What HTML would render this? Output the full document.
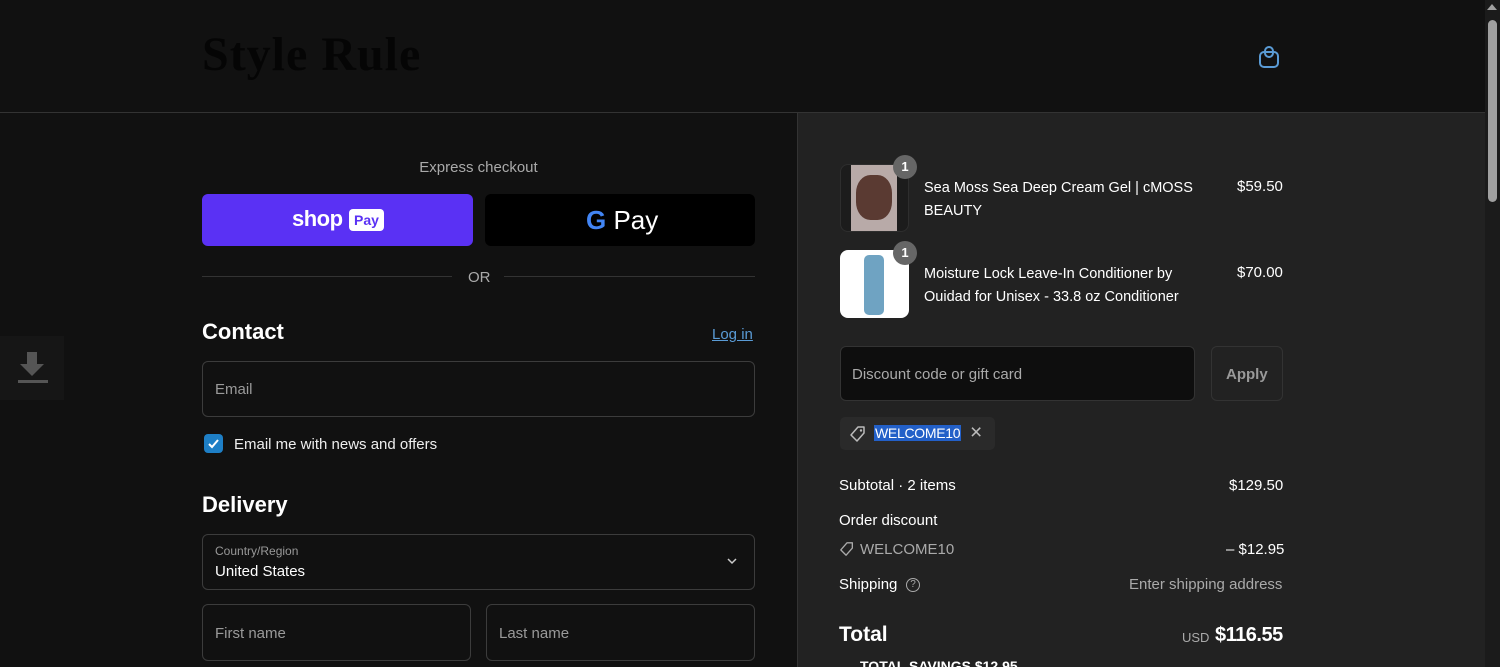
<!DOCTYPE html>
<html><head><meta charset="utf-8"><style>
*{box-sizing:border-box;margin:0;padding:0}
html,body{width:1500px;height:667px;overflow:hidden}
body{background:#111;font-family:"Liberation Sans",sans-serif;color:#eee;position:relative}
.abs{position:absolute}
.hdr{left:0;top:0;width:1485px;height:113px;border-bottom:1px solid #333;background:#111}
.logo{left:202px;top:27px;font-family:"Liberation Serif",serif;font-weight:bold;font-size:48px;color:#050505;letter-spacing:1px}
.right{left:797px;top:113px;width:688px;height:554px;background:#222;border-left:1px solid #333}
.sb{left:1485px;top:0;width:15px;height:667px;background:#1b1b1b}
.thumb{left:1488px;top:20px;width:9px;height:182px;background:#a0a0a0;border-radius:5px}
.field{border:1px solid #3c3c3c;border-radius:6px;background:#111}
.ph{font-size:15px;color:#9a9a9a}
.t15{font-size:15px}
</style></head><body>
<div class="abs hdr"></div>
<div class="abs logo">Style Rule</div>
<svg class="abs" style="left:1258px;top:44px" width="24" height="26" viewBox="0 0 24 26"><rect x="2" y="8" width="18" height="15" rx="4" fill="none" stroke="#5a9bd5" stroke-width="2"/><rect x="7" y="3" width="8" height="10" rx="4" fill="none" stroke="#5a9bd5" stroke-width="2"/></svg>
<div class="abs sb"></div><div class="abs thumb"></div>
<div class="abs" style="left:1487px;top:4px;width:0;height:0;border-left:5px solid transparent;border-right:5px solid transparent;border-bottom:6px solid #a0a0a0"></div>

<div class="abs" style="left:0;top:336px;width:64px;height:64px;background:#161616"></div>
<svg class="abs" style="left:16px;top:350px" width="34" height="36" viewBox="0 0 34 36"><path d="M11 2h10v12h7L16 26 4 14h7z" fill="#555"/><rect x="2" y="30" width="30" height="3" fill="#555"/></svg>

<div class="abs t15" style="left:202px;top:159px;width:553px;text-align:center;color:#aaa">Express checkout</div>
<div class="abs" style="left:202px;top:194px;width:271px;height:52px;background:#5a31f4;border-radius:6px"></div>
<div class="abs" style="left:292px;top:206px;font-size:22px;font-weight:bold;color:#fff;letter-spacing:-0.5px">shop</div>
<div class="abs" style="left:349px;top:209px;width:35px;height:22px;background:#fff;border-radius:4px;color:#5a31f4;font-size:14px;font-weight:bold;text-align:center;line-height:22px">Pay</div>
<div class="abs" style="left:485px;top:194px;width:270px;height:52px;background:#000;border-radius:6px"></div>
<div class="abs" style="left:586px;top:205px;font-size:26px;color:#fff"><span style="font-weight:bold;color:#4285f4">G</span> Pay</div>
<div class="abs" style="left:202px;top:276px;width:250px;height:1px;background:#333"></div>
<div class="abs" style="left:504px;top:276px;width:251px;height:1px;background:#333"></div>
<div class="abs t15" style="left:468px;top:269px;color:#aaa">OR</div>

<div class="abs" style="left:202px;top:319px;font-size:22px;font-weight:bold;color:#fff">Contact</div>
<div class="abs t15" style="left:712px;top:326px;color:#5a9bd5;text-decoration:underline">Log in</div>
<div class="abs field" style="left:202px;top:361px;width:553px;height:56px"></div>
<div class="abs ph" style="left:215px;top:381px">Email</div>
<div class="abs" style="left:204px;top:434px;width:19px;height:19px;background:#1e7fc6;border-radius:4px"></div>
<svg class="abs" style="left:206px;top:436px" width="15" height="15" viewBox="0 0 15 15"><path d="M3 8l3 3 6-7" fill="none" stroke="#fff" stroke-width="2"/></svg>
<div class="abs t15" style="left:234px;top:436px;color:#eee">Email me with news and offers</div>

<div class="abs" style="left:202px;top:492px;font-size:22px;font-weight:bold;color:#fff">Delivery</div>
<div class="abs field" style="left:202px;top:534px;width:553px;height:56px"></div>
<div class="abs" style="left:215px;top:544px;font-size:12px;color:#999">Country/Region</div>
<div class="abs t15" style="left:215px;top:563px;color:#fff">United States</div>
<svg class="abs" style="left:726px;top:557px" width="12" height="8" viewBox="0 0 12 8"><path d="M2 2l4 4 4-4" fill="none" stroke="#ccc" stroke-width="1.5"/></svg>
<div class="abs field" style="left:202px;top:604px;width:269px;height:57px"></div>
<div class="abs ph" style="left:215px;top:625px">First name</div>
<div class="abs field" style="left:486px;top:604px;width:269px;height:57px"></div>
<div class="abs ph" style="left:499px;top:625px">Last name</div>

<div class="abs right"></div>
<div class="abs" style="left:840px;top:164px;width:69px;height:68px;border-radius:8px;background:#1c1c1c;border:1px solid #2e2e2e"></div>
<div class="abs" style="left:851px;top:165px;width:46px;height:66px;background:#b8aaa8"></div>
<div class="abs" style="left:856px;top:175px;width:36px;height:45px;background:#5a3a32;border-radius:40%"></div>
<div class="abs" style="left:840px;top:250px;width:69px;height:68px;border-radius:8px;background:#fff"></div>
<div class="abs" style="left:864px;top:255px;width:20px;height:60px;background:#6fa3c2;border-radius:5px"></div>
<div class="abs" style="left:893px;top:155px;width:24px;height:24px;border-radius:12px;background:#666;color:#fff;font-size:13px;font-weight:bold;text-align:center;line-height:24px">1</div>
<div class="abs" style="left:893px;top:241px;width:24px;height:24px;border-radius:12px;background:#666;color:#fff;font-size:13px;font-weight:bold;text-align:center;line-height:24px">1</div>
<div class="abs" style="left:924px;top:177px;width:290px;line-height:23px;color:#fff;font-size:14.5px">Sea Moss Sea Deep Cream Gel | cMOSS BEAUTY</div>
<div class="abs t15" style="left:1237px;top:178px;color:#fff">$59.50</div>
<div class="abs" style="left:924px;top:263px;width:290px;line-height:23px;color:#fff;font-size:14.5px">Moisture Lock Leave-In Conditioner by Ouidad for Unisex - 33.8 oz Conditioner</div>
<div class="abs t15" style="left:1237px;top:264px;color:#fff">$70.00</div>

<div class="abs" style="left:840px;top:346px;width:355px;height:55px;border:1px solid #333;border-radius:6px;background:#0e0e0e"></div>
<div class="abs ph" style="left:852px;top:366px;color:#aaa">Discount code or gift card</div>
<div class="abs" style="left:1211px;top:346px;width:72px;height:55px;border:1px solid #333;border-radius:6px;background:#222"></div>
<div class="abs t15" style="left:1226px;top:366px;font-weight:bold;color:#999">Apply</div>

<div class="abs" style="left:840px;top:417px;width:155px;height:33px;background:#2a2a2a;border-radius:5px"></div>
<svg class="abs" style="left:849px;top:425px" width="18" height="18" viewBox="0 0 18 18"><path d="M9 2h6v6l-7 8-6-6z" fill="none" stroke="#bbb" stroke-width="1.5" stroke-linejoin="round"/><circle cx="12" cy="5.5" r="1.2" fill="#bbb"/></svg>
<div class="abs" style="left:874px;top:425px;background:#2360c8;color:#fff;font-size:14px;padding:0 1px;letter-spacing:-0.3px">WELCOME10</div>
<div class="abs" style="left:970px;top:421px;font-size:21px;color:#bbb">×</div>

<div class="abs t15" style="left:839px;top:477px;color:#fff">Subtotal · 2 items</div>
<div class="abs t15" style="left:1229px;top:477px;color:#fff">$129.50</div>
<div class="abs t15" style="left:839px;top:512px;color:#fff">Order discount</div>
<svg class="abs" style="left:839px;top:541px" width="16" height="16" viewBox="0 0 18 18"><path d="M9 2h6v6l-7 8-6-6z" fill="none" stroke="#aaa" stroke-width="1.5" stroke-linejoin="round"/></svg>
<div class="abs t15" style="left:860px;top:541px;color:#aaa">WELCOME10</div>
<div class="abs t15" style="left:1226px;top:541px;color:#fff">– $12.95</div>
<div class="abs t15" style="left:839px;top:576px;color:#fff">Shipping</div>
<div class="abs" style="left:906px;top:578px;width:14px;height:14px;border:1.5px solid #aaa;border-radius:50%;font-size:10px;color:#aaa;text-align:center;line-height:12px">?</div>
<div class="abs t15" style="left:1129px;top:576px;color:#aaa">Enter shipping address</div>
<div class="abs" style="left:839px;top:623px;font-size:21px;font-weight:bold;color:#fff">Total</div>
<div class="abs" style="left:1182px;top:630px;font-size:13px;color:#aaa">USD</div>
<div class="abs" style="left:1215px;top:624px;font-size:20px;font-weight:bold;color:#fff;letter-spacing:-0.5px">$116.55</div>
<div class="abs" style="left:860px;top:658px;font-size:14px;font-weight:bold;color:#fff">TOTAL SAVINGS $12.95</div>
</body></html>
